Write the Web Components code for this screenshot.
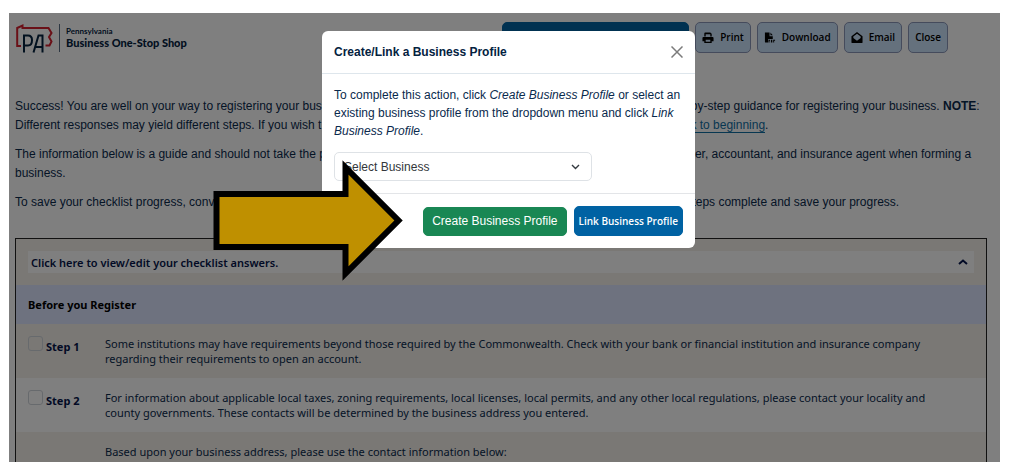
<!DOCTYPE html>
<html lang="en">
<head>
<meta charset="utf-8">
<title>Business One-Stop Shop</title>
<style>
  body {
    --navy: #0a2a4d;
    --blue: #0062a3;
    --ui-font: "Open Sans", "Noto Sans", sans-serif;
    --list-font: "Noto Sans", "Open Sans", sans-serif;
    --copy-font: "Liberation Sans", Arial, sans-serif;

    box-sizing: border-box;
    height: 100vh;
    margin: 0;
    padding: 13px 12px 13px 9px;
    background: #fff;
    color: var(--navy);
    font: 12px/19px var(--copy-font);
  }
</style>
</head>
<body>
<one-stop-page>
  <site-header slot="header">
    <tool-button primary></tool-button>
    <tool-button icon="print">Print</tool-button>
    <tool-button icon="download">Download</tool-button>
    <tool-button icon="email">Email</tool-button>
    <tool-button>Close</tool-button>
  </site-header>

  <intro-copy></intro-copy>

  <check-list summary="Click here to view/edit your checklist answers." heading="Before you Register">
    <check-step label="Step 1">Some institutions may have requirements beyond those required by the Commonwealth. Check with your bank or financial institution and insurance company regarding their requirements to open an account.</check-step>
    <check-step label="Step 2">For information about applicable local taxes, zoning requirements, local licenses, local permits, and any other local regulations, please contact your locality and county governments. These contacts will be determined by the business address you entered.</check-step>
    <check-step>Based upon your business address, please use the contact information below:</check-step>
  </check-list>

  <profile-dialog slot="dialog" heading="Create/Link a Business Profile">
    To complete this action, click <em>Create Business Profile</em> or select an existing business profile from the dropdown menu and click <em>Link Business Profile</em>.
  </profile-dialog>
  <callout-arrow slot="callout"></callout-arrow>
</one-stop-page>

<script>
class ShadowElement extends HTMLElement {
  constructor() {
    super();
    this.attachShadow({ mode: "open" });
  }

  connectedCallback() {
    this.shadowRoot.innerHTML = `<style>${this.constructor.styles}</style>${this.render()}`;
  }
}

class OneStopPage extends ShadowElement {
  static get styles() {
    return /* css */`
      :host {
        display: block;
        position: relative;
        height: 100%;
        overflow: hidden;
        background: #fff;
      }

      .page { padding: 9px 13px 0 6px; }

      .backdrop {
        position: absolute;
        inset: 0;
        display: flex;
        justify-content: center;
        align-items: flex-start;
        padding: 18px 0 0 8px;
        background: rgb(0 0 0 / .5);
      }
    `;
  }

  render() {
    return /* html */`
      <div class="page">
        <slot name="header"></slot>
        <slot></slot>
      </div>
      <div class="backdrop"><slot name="dialog"></slot></div>
      <slot name="callout"></slot>
    `;
  }
}

class SiteHeader extends ShadowElement {
  static get styles() {
    return /* css */`
      :host {
        display: flex;
        justify-content: space-between;
        align-items: flex-start;
        padding-right: 39px;
      }

      .brand {
        display: flex;
        align-items: center;
        gap: 6px;
        color: #04223f;
        font-family: Lato, sans-serif;
        text-decoration: none;
      }

      .brand svg { display: block; }

      .name {
        display: grid;
        padding: 2px 0 4px 6px;
        border-left: 1px solid #5b6f84;
        font-size: 8px;
        font-weight: 700;
        line-height: 11px;
      }

      .name b {
        font-size: 11px;
        font-weight: 900;
      }

      nav { display: flex; gap: 6px; }
    `;
  }

  render() {
    return /* html */`
      <a class="brand" href="#">
        <svg width="38" height="32" viewBox="0 0 38 32" fill="none" aria-hidden="true">
          <path d="M6 24H2.200V6L7.500 3.500V6H33.500L36.500 11L34 15L36.500 19.500L34.500 23.500H30.500" stroke="#d4202f" stroke-width="2"/>
          <path d="M9 30.500V13.500H13Q17 13.500 17 18Q17 23.500 13 23.500H9M18.500 30.500L23.500 13.500H27.500V30.500M21 25H27.500" stroke="#04223f" stroke-width="2"/>
        </svg>
        <span class="name">Pennsylvania<b>Business One-Stop Shop</b></span>
      </a>
      <nav><slot></slot></nav>
    `;
  }
}

class ToolButton extends ShadowElement {
  static get icons() {
    return {
      print: `<path d="M2.500 5V1.500Q2.500 .5 3.500 .5H9L10.500 2V5H9V2.500H4V5ZM1.500 5.500H11.500Q12.500 5.500 12.500 6.500V10H10.500V12H2.500V10H.5V6.500Q.5 5.500 1.500 5.500ZM4 8.500V10.500H9V8.500Z"/>`,
      download: `<path d="M1 .5H6V4.500H9.500V7.500H4.500V11.500H2Q1 11.500 1 10.500ZM7 .5L9.500 3.500H7ZM5 8.500H6.500V9.500H6V11.500H5ZM7.500 8.500H9V11.500H7.500ZM10 8.500H12V9.500H11V11.500H10Z"/>`,
      email: `<path fill-rule="evenodd" d="M6.500 0L12.500 4.500V11Q12.500 12 11.500 12H1.500Q.5 12 .5 11V4.500ZM6.500 2L2.500 5V6.500L6.500 9.500L10.500 6.500V5Z"/>`,
    };
  }

  static get styles() {
    return /* css */`
      :host { display: block; }

      button {
        display: flex;
        align-items: center;
        gap: 6px;
        box-sizing: border-box;
        height: 31px;
        padding: 0 6px;
        border: 1px solid #8a96b8;
        border-radius: 5px;
        background: #cbe2fa;
        color: #000;
        font: 600 10px/15px var(--ui-font);
      }

      :host([primary]) button {
        width: 187px;
        border-color: var(--blue);
        background: var(--blue);
      }
    `;
  }

  render() {
    const icon = ToolButton.icons[this.getAttribute("icon")];
    return /* html */`
      <button type="button">
        ${icon ? `<svg width="12" height="12" viewBox="0 0 13 13" aria-hidden="true">${icon}</svg>` : ""}
        <slot></slot>
      </button>
    `;
  }
}

class IntroCopy extends ShadowElement {
  static get styles() {
    return /* css */`
      :host {
        display: grid;
        gap: 10px;
        padding: 43px 0 26px;
      }

      p { margin: 0; }

      a {
        border-bottom: 1px solid;
        color: #0f6ea3;
        text-decoration: none;
      }

      /* stretch of a line that runs under the dialog */
      .under {
        display: inline-block;
        width: 369px;
      }

      .under.wide { width: 478px; }
    `;
  }

  render() {
    return /* html */`
      <p>Success! You are well on your way to registering your bus<span class="under"></span>by-step guidance for registering your business. <b>NOTE</b>: <span>Different responses may yield different steps. If you wish t</span><span class="under"></span><a href="#">k to beginning</a>.</p>
      <p>The information below is a guide and should not take the p<span class="under"></span>er, accountant, and insurance agent when forming a <span>business.</span></p>
      <p>To save your checklist progress, conv<span class="under wide"></span>teps complete and save your progress.</p>
    `;
  }
}

class CheckList extends ShadowElement {
  static get styles() {
    return /* css */`
      :host {
        display: block;
        border: 1px solid #222;
        font: 11px/15px var(--list-font);
      }

      .summary {
        padding: 12px;
        background: #f4f0ea;
      }

      .summary button {
        display: flex;
        justify-content: space-between;
        align-items: center;
        width: 100%;
        height: 22px;
        padding: 0 6px 0 3px;
        border: 0;
        background: #fff;
        color: #04144a;
        font: 600 11px/15px var(--list-font);
      }

      h2 {
        margin: 0;
        padding: 12px;
        background: #dde4ff;
        color: #000;
        font: 700 11px/15px var(--list-font);
      }
    `;
  }

  render() {
    return /* html */`
      <div class="summary">
        <button type="button" aria-expanded="true">
          ${this.getAttribute("summary")}
          <svg width="10" height="6" viewBox="0 0 10 6" fill="none" aria-hidden="true">
            <path d="M1 5L5 1.500L9 5" stroke="currentColor" stroke-width="2"/>
          </svg>
        </button>
      </div>
      <h2>${this.getAttribute("heading")}</h2>
      <slot></slot>
    `;
  }
}

class CheckStep extends ShadowElement {
  static get styles() {
    return /* css */`
      :host {
        display: grid;
        grid-template-columns: 77px 1fr;
        padding: 12px 32px 12px 12px;
        color: var(--navy);
      }

      :host(:nth-of-type(odd)) { background: #f4f0ea; }

      label {
        display: flex;
        align-items: flex-start;
        gap: 3px;
        color: #04144a;
        font-weight: 700;
        line-height: 21px;
      }

      input {
        appearance: none;
        box-sizing: border-box;
        width: 15px;
        height: 15px;
        margin: 0;
        border: 1px solid #cfd4da;
        border-radius: 3px;
      }

      p { margin: 0; }
    `;
  }

  render() {
    const label = this.getAttribute("label");
    return /* html */`
      <div>${label ? `<label><input type="checkbox">${label}</label>` : ""}</div>
      <p><slot></slot></p>
    `;
  }
}

class ProfileDialog extends ShadowElement {
  static get styles() {
    return /* css */`
      :host {
        display: block;
        width: 373px;
        border-radius: 6px;
        background: #fff;
        line-height: 18px;
      }

      header, footer {
        display: flex;
        align-items: center;
        padding: 12px;
      }

      header {
        justify-content: space-between;
        border-bottom: 1px solid #dee6ec;
      }

      h1 {
        margin: 0;
        color: #04223f;
        font: 700 12px/18px var(--copy-font);
      }

      .body { padding: 12px; }

      p { margin: 0 0 12px; }

      footer {
        justify-content: flex-end;
        gap: 7px;
        border-top: 1px solid #e3e5e8;
      }

      button {
        height: 29px;
        padding: 0 8px;
        border: 1px solid #198754;
        border-radius: 5px;
        background: #198754;
        color: #fff;
        font: 12px/18px var(--copy-font);
      }

      .link {
        height: 30px;
        padding: 0 4px;
        border-color: var(--blue);
        background: var(--blue);
        font: 600 10px/18px var(--ui-font);
      }

      .close {
        display: flex;
        height: 18px;
        padding: 0;
        border: 0;
        background: none;
        align-items: center;
      }

      .picker { display: grid; width: 258px; }

      .picker > * { grid-area: 1 / 1; }

      .picker svg {
        place-self: center end;
        margin-right: 12px;
        pointer-events: none;
      }

      select {
        appearance: none;
        height: 29px;
        padding: 0 9px;
        border: 1px solid #dee2e6;
        border-radius: 5px;
        background: #fff;
        color: #33373b;
        font: 12px/18px var(--copy-font);
      }
    `;
  }

  render() {
    return /* html */`
      <section role="dialog" aria-labelledby="title">
        <header>
          <h1 id="title">${this.getAttribute("heading")}</h1>
          <button class="close" type="button" aria-label="Close">
            <svg width="12" height="12" viewBox="0 0 12 12" fill="none">
              <path d="M.5 .5L11.500 11.500M11.500 .5L.5 11.500" stroke="#7b7b7b" stroke-width="1.500"/>
            </svg>
          </button>
        </header>
        <div class="body">
          <p><slot></slot></p>
          <div class="picker">
            <select aria-label="Business"><option>Select Business</option></select>
            <svg width="9" height="6" viewBox="0 0 9 6" fill="none" aria-hidden="true">
              <path d="M1 1L4.500 4.500L8 1" stroke="#343a40" stroke-width="1.400"/>
            </svg>
          </div>
        </div>
        <footer>
          <button type="button">Create Business Profile</button>
          <button class="link" type="button">Link Business Profile</button>
        </footer>
      </section>
    `;
  }
}

// Points at the "Create Business Profile" button, drawn over the dialog.
class CalloutArrow extends ShadowElement {
  static get styles() {
    return /* css */`
      :host {
        position: absolute;
        top: 147px;
        left: calc(50% - 292px);
        pointer-events: none;
      }

      svg { display: block; }
    `;
  }

  render() {
    return /* html */`
      <svg width="190" height="122" viewBox="0 0 190 122" aria-hidden="true">
        <path d="M3.500 34H132.500V7.500L185.500 60.500L132.500 113.500V87H3.500Z" fill="#bf9000" stroke="#000" stroke-width="6"/>
      </svg>
    `;
  }
}

customElements.define("one-stop-page", OneStopPage);
customElements.define("site-header", SiteHeader);
customElements.define("tool-button", ToolButton);
customElements.define("intro-copy", IntroCopy);
customElements.define("check-list", CheckList);
customElements.define("check-step", CheckStep);
customElements.define("profile-dialog", ProfileDialog);
customElements.define("callout-arrow", CalloutArrow);
</script>
</body>
</html>
